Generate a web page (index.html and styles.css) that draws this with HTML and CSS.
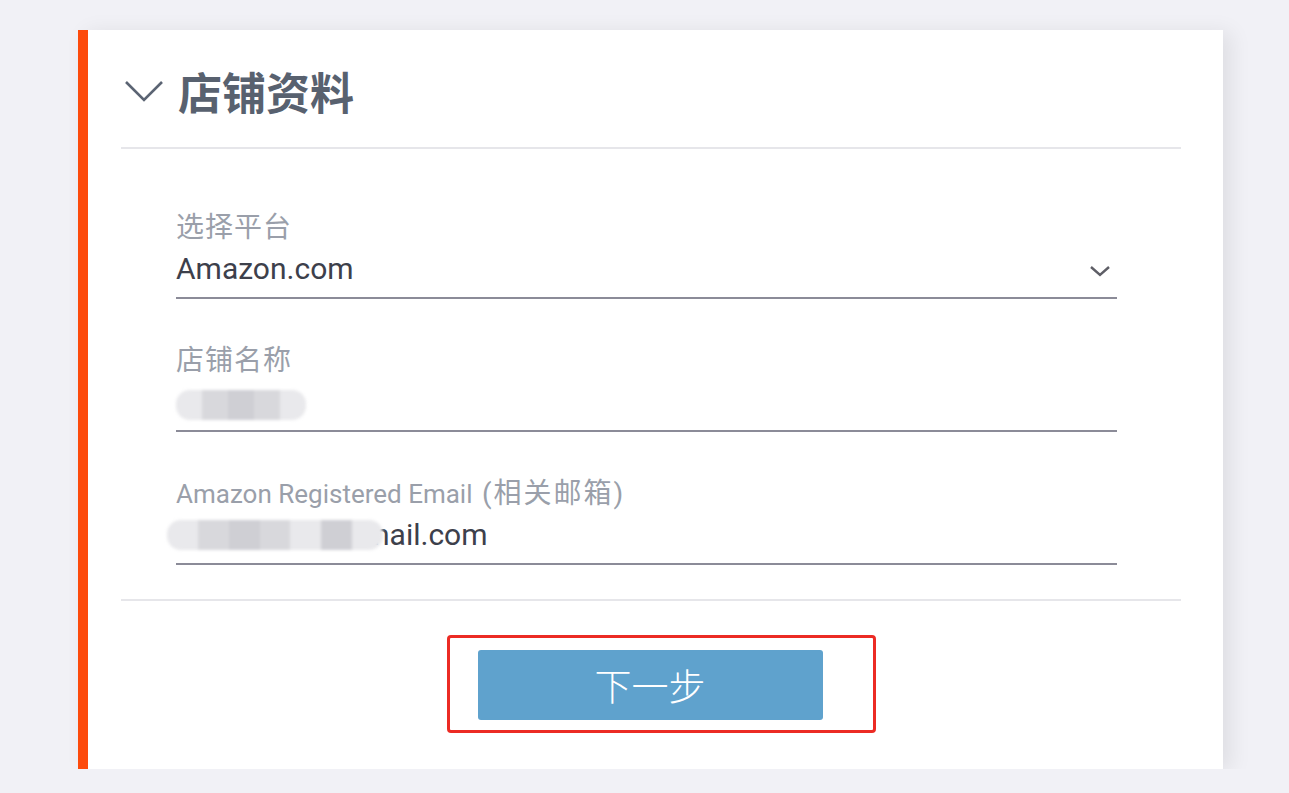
FILE: index.html
```html
<!DOCTYPE html>
<html>
<head>
  <title>店铺资料</title>
  <link rel="stylesheet" href="styles.css">
</head>
<body>
  <div class="card">
    <div class="card-head">
      <svg class="head-arrow" width="40" height="24" viewBox="0 0 40 24">
        <path d="M2 3 L20 21 L38 3" fill="none" stroke="#5b6473" stroke-width="2.6"/>
      </svg>
      <h2>店铺资料</h2>
    </div>

    <div class="card-body">
      <div class="field">
        <div class="label cjk">选择平台</div>
        <div class="value select">
          <span>Amazon.com</span>
          <svg width="22" height="14" viewBox="0 0 22 14">
            <path d="M2 3 L11 11 L20 3" fill="none" stroke="#5e5e66" stroke-width="2.4"/>
          </svg>
        </div>
      </div>

      <div class="field">
        <div class="label cjk">店铺名称</div>
        <div class="value">
          <span class="masked name-mask"><i></i><i></i><i></i><i></i><i></i></span>
        </div>
      </div>

      <div class="field">
        <div class="label">Amazon Registered Email <span class="cjk wide">(相关邮箱)</span></div>
        <div class="value">
          <span class="masked mail-mask"><i></i><i></i><i></i><i></i><i></i><i></i><i></i></span><span>nail.com</span>
        </div>
      </div>
    </div>

    <div class="card-foot">
      <div class="mark">
        <button class="next">下一步</button>
      </div>
    </div>
  </div>
</body>
</html>
```

FILE: styles.css
```css
body {
  margin: 0;
  background: #f1f1f6;
  font-family: Roboto, "Noto Sans CJK SC", sans-serif;
}

.card {
  margin: 30px 0 0 78px;
  width: 1060px;
  height: 739px;
  background: #fff;
  border-left: 10px solid #fd4a0b;
  box-shadow: 8px 2px 20px rgba(0, 0, 0, 0.08);
  padding: 0 42px 0 33px;
}

.card-head {
  height: 117px;
  display: flex;
  align-items: center;
  border-bottom: 2px solid #e6e6ea;
}
.head-arrow { margin: 4px 0 0 3px; }
.card-head h2 {
  margin: 4px 0 0 14px;
  font-size: 44px;
  font-weight: 700;
  color: #58616f;
}

.card-body {
  padding: 64px 64px 34px 55px;
  border-bottom: 2px solid #e6e6ea;
}

.field {
  border-bottom: 2px solid #8b8b98;
  padding-bottom: 8px;
  margin-bottom: 47px;
}
.field:last-child { margin-bottom: 0; }

.label {
  line-height: 30px;
  font-size: 26px;
  color: #9a9faa;
  margin-bottom: 6px;
}
.cjk { font-size: 28px; letter-spacing: 1px; }
.wide { letter-spacing: 2px; margin-left: 3px; }

.value {
  height: 40px;
  line-height: 40px;
  font-size: 30px;
  color: #3d404b;
  display: flex;
  align-items: center;
}
.select { justify-content: space-between; }
.select svg { margin: 4px 6px 0 0; }

.masked {
  display: inline-flex;
  height: 30px;
  border-radius: 14px;
  overflow: hidden;
  filter: blur(1.5px);
  background: #e9e9ec;
}
.masked i { flex: 1; }
.masked i:nth-child(2n) { background: #d8d8dc; }
.masked i:nth-child(3n) { background: #cfcfd4; }
.name-mask { width: 130px; margin-top: 6px; }
.mail-mask {
  width: 216px;
  margin: 0 -10px 0 -9px;
  position: relative;
  z-index: 1;
}

.card-foot {
  padding-top: 34px;
  display: flex;
  justify-content: center;
}
.mark {
  border: 3px solid #ec2b24;
  border-radius: 4px;
  padding: 12px 50px 10px 28px;
  margin-left: 20px;
}
.next {
  display: block;
  width: 345px;
  height: 70px;
  border: none;
  border-radius: 3px;
  background: #5fa2cd;
  color: #fff;
  font-family: "Noto Sans CJK SC", sans-serif;
  font-size: 37px;
  font-weight: 300;
}
```
